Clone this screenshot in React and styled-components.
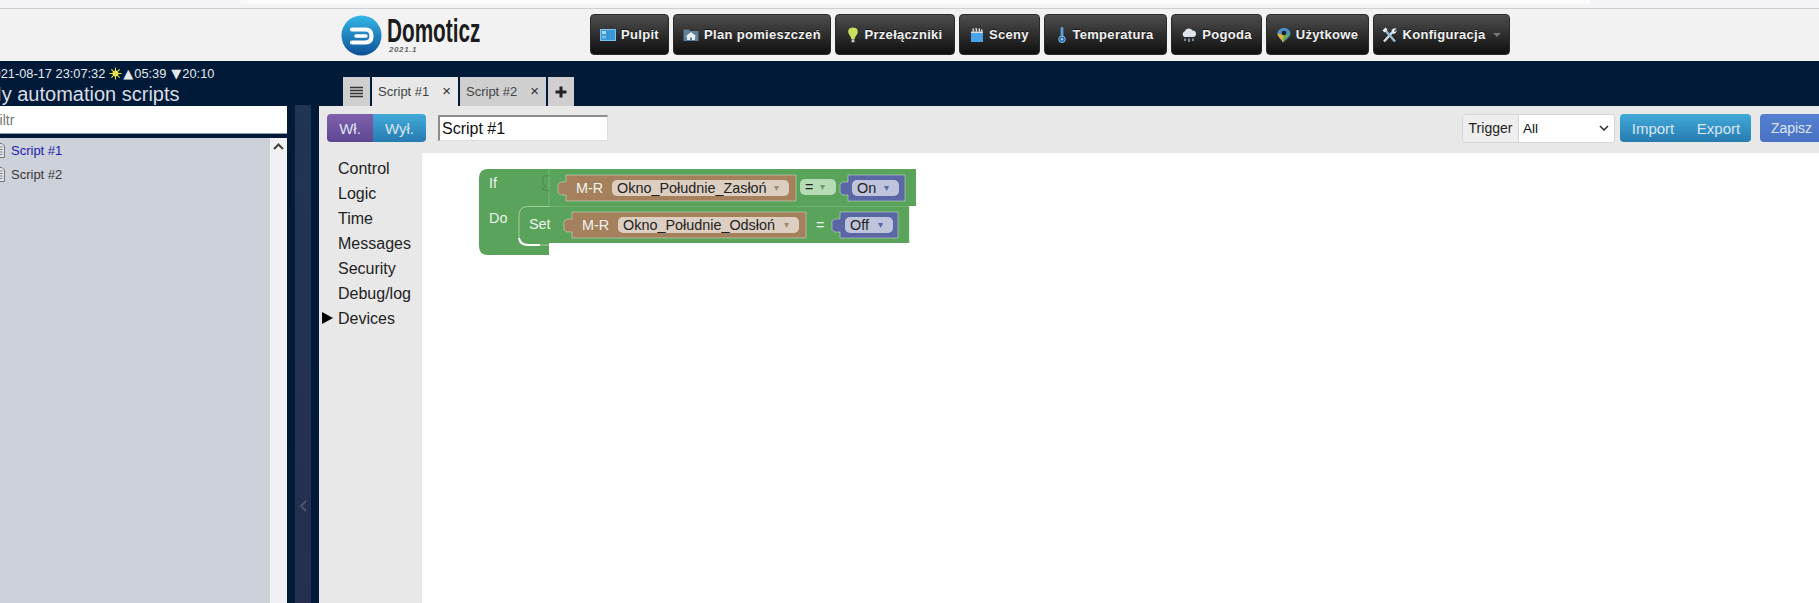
import React from "react";
import styled, { createGlobalStyle } from "styled-components";

const Global = createGlobalStyle`
  html, body { margin: 0; padding: 0; height: 100%; overflow: hidden; }
  body { font-family: "Liberation Sans", Arial, sans-serif; background: #fff; }
  #root { height: 100%; }
`;

const Page = styled.div`
  width: 1819px;
  height: 603px;
  display: flex;
  flex-direction: column;
  overflow: hidden;
`;

const TopStrip = styled.div`
  height: 8px;
  flex-shrink: 0;
  background: #f4f4f6;
  border-bottom: 1px solid #cfcfcf;
  padding-left: 240px;
`;

const TopPill = styled.div`
  width: 1350px;
  height: 4px;
  background: #fbfbfb;
  border-radius: 0 0 6px 6px;
`;

const Header = styled.header`
  height: 52px;
  flex-shrink: 0;
  display: flex;
  align-items: center;
  background: #f2f2f2;
  padding-left: 341px;
`;

const Brand = styled.div`
  display: flex;
  align-items: center;
  gap: 5px;
  width: 249px;
`;

const BrandText = styled.div`
  display: flex;
  flex-direction: column;
  width: 94px;
  margin-top: -3px;
`;

const BrandName = styled.span`
  display: block;
  width: 155px;
  font-weight: 700;
  font-size: 34px;
  line-height: 32px;
  color: #1c1c1c;
  transform: scaleX(0.61);
  transform-origin: left center;
`;

const BrandVersion = styled.span`
  font-size: 8px;
  line-height: 8px;
  font-style: italic;
  font-weight: 700;
  letter-spacing: 0.6px;
  color: #666;
  margin-left: 2px;
`;

const Nav = styled.nav`
  display: flex;
  gap: 4px;
  margin-top: -1px;
`;

const NavButton = styled.div`
  height: 41px;
  box-sizing: border-box;
  display: flex;
  align-items: center;
  justify-content: center;
  gap: 5px;
  width: ${({ $w }) => $w}px;
  border-radius: 4px;
  border: 1px solid #2a2a2a;
  background: linear-gradient(#4e4e4e, #0f0f0f);
  color: #f1f1f1;
  font-size: 13px;
  font-weight: 700;
  letter-spacing: 0.3px;
  text-shadow: 0 -1px 0 rgba(0, 0, 0, 0.6);
`;

const Caret = styled.span`
  width: 0;
  height: 0;
  margin-left: 2px;
  border-left: 4px solid transparent;
  border-right: 4px solid transparent;
  border-top: 4px solid #777;
`;

const Body = styled.div`
  flex: 1;
  display: flex;
  min-height: 0;
  background: #001a38;
`;

const Side = styled.aside`
  width: 287px;
  flex-shrink: 0;
  display: flex;
  flex-direction: column;
  overflow: hidden;
`;

const Clock = styled.div`
  margin: 4px 0 0 -13.5px;
  height: 16px;
  display: flex;
  align-items: center;
  gap: 1px;
  white-space: nowrap;
  font-size: 12.8px;
  color: #e4e8ee;
`;

const SunIcon = styled.svg`
  margin-left: 3px;
`;

const Triangle = styled.span`
  font-family: "DejaVu Sans", sans-serif;
  font-size: 13px;
  margin-left: ${({ $gap }) => $gap || 0}px;
`;

const Title = styled.h2`
  margin: 2px 0 0 -15px;
  height: 23px;
  line-height: 23px;
  font-size: 20px;
  font-weight: 400;
  white-space: nowrap;
  color: #d8dde4;
`;

const FilterInput = styled.input`
  display: block;
  box-sizing: border-box;
  height: 28px;
  flex-shrink: 0;
  width: 296px;
  margin-left: -9px;
  padding: 0;
  border: 0;
  border-bottom: 1px solid #8b9bb0;
  background: #fff;
  font-family: inherit;
  font-size: 14px;
  outline: none;
  &::placeholder { color: #777; opacity: 1; }
`;

const ListPanel = styled.div`
  margin-top: 4px;
  flex: 1;
  display: flex;
  min-height: 0;
`;

const ScriptList = styled.ul`
  flex: 1;
  margin: 0;
  padding: 0;
  list-style: none;
  background: #cdd1d9;
`;

const ScriptRow = styled.li`
  height: 24px;
  display: flex;
  align-items: center;
  gap: 6px;
  margin-left: -7px;
  font-size: 13px;
  color: ${({ $active }) => ($active ? "#1c1cb0" : "#3a3a3a")};
`;

const Scrollbar = styled.div`
  width: 17px;
  background: #f1f1f3;
  display: flex;
  justify-content: center;
  padding-top: 5px;
  box-sizing: border-box;
`;

const Splitter = styled.div`
  width: 16px;
  flex-shrink: 0;
  margin: 44px 8px 0;
  background: linear-gradient(#1f3554, #262f50);
  display: flex;
  align-items: flex-end;
  justify-content: center;
  padding-bottom: 91px;
  box-sizing: border-box;
`;

const Editor = styled.section`
  flex: 1;
  min-width: 0;
  display: flex;
  flex-direction: column;
`;

const TabBar = styled.div`
  height: 45px;
  flex-shrink: 0;
  display: flex;
  align-items: flex-end;
  gap: 2px;
  padding-left: 24px;
`;

const TabIcon = styled.div`
  height: 29px;
  width: ${({ $w }) => $w}px;
  display: flex;
  align-items: center;
  justify-content: center;
  background: #cfcfcf;
`;

const Tab = styled.div`
  height: 29px;
  width: ${({ $w }) => $w}px;
  box-sizing: border-box;
  padding: 0 7px 0 6px;
  display: flex;
  align-items: center;
  justify-content: space-between;
  font-size: 13px;
  color: #444;
  background: ${({ $active }) => ($active ? "#e8e8e8" : "#cfcfcf")};
`;

const TabClose = styled.span`
  font-size: 15px;
  color: #333;
  margin-top: -3px;
`;

const Panel = styled.div`
  flex: 1;
  min-height: 0;
  display: flex;
  flex-direction: column;
  background: #e8e8e8;
`;

const Toolbar = styled.div`
  height: 47px;
  flex-shrink: 0;
  display: flex;
  align-items: center;
  padding-left: 8px;
  padding-bottom: 3px;
  box-sizing: border-box;
`;

const Segment = styled.div`
  display: flex;
  height: 28px;
  border-radius: 4px;
  overflow: hidden;
`;

const SegmentButton = styled.div`
  display: flex;
  align-items: center;
  justify-content: center;
  width: ${({ $w }) => $w}px;
  font-size: ${({ $kind }) => ($kind === "save" ? 14 : 15)}px;
  color: #d9e6f2;
  background: ${({ $kind }) =>
    $kind === "purple"
      ? "linear-gradient(#8160ac, #5e4792)"
      : $kind === "save"
      ? "linear-gradient(#5580d2, #4a72c2)"
      : "linear-gradient(#41aad9, #277bb0)"};
`;

const NameInput = styled.input`
  box-sizing: border-box;
  margin-left: 12px;
  width: 170px;
  height: 26px;
  padding: 0 2px;
  border: 0;
  border-top: 2px solid #8c8c8c;
  border-left: 2px solid #8c8c8c;
  border-right: 1px solid #ddd;
  border-bottom: 1px solid #ddd;
  background: #fff;
  font-family: "Liberation Sans", sans-serif;
  font-size: 16px;
  color: #111;
  outline: none;
`;

const RightTools = styled.div`
  margin-left: auto;
  display: flex;
  align-items: center;
`;

const TriggerGroup = styled.div`
  display: flex;
  height: 29px;
  box-sizing: border-box;
  border: 1px solid #d6d6d6;
  border-radius: 4px;
  overflow: hidden;
  margin-right: 5px;
`;

const TriggerLabel = styled.div`
  width: 55px;
  display: flex;
  align-items: center;
  justify-content: center;
  font-size: 14px;
  color: #222;
  background: #eee;
  border-right: 1px solid #d6d6d6;
`;

const TriggerSelect = styled.div`
  width: 95px;
  box-sizing: border-box;
  padding: 0 5px 0 4px;
  display: flex;
  align-items: center;
  justify-content: space-between;
  font-size: 13.5px;
  color: #111;
  background: #fff;
`;

const SaveWrap = styled.div`
  margin-left: 9px;
  margin-right: -4px;
`;

const Work = styled.div`
  flex: 1;
  min-height: 0;
  display: flex;
`;

const Toolbox = styled.ul`
  width: 103px;
  flex-shrink: 0;
  box-sizing: border-box;
  margin: 0;
  padding: 3px 0 0 19px;
  list-style: none;
`;

const ToolboxItem = styled.li`
  position: relative;
  height: 25px;
  line-height: 25px;
  font-size: 16px;
  color: #222;
`;

const ToolboxArrow = styled.span`
  position: absolute;
  left: -16px;
  top: 6px;
  width: 0;
  height: 0;
  border-top: 6px solid transparent;
  border-bottom: 6px solid transparent;
  border-left: 11px solid #000;
`;

const Canvas = styled.div`
  flex: 1;
  min-width: 0;
  background: #fff;
  padding: 7px 0 0 48px;
`;

const BlocksSvg = styled.svg`
  display: block;
`;

const BlockLabel = styled.text`
  font-family: "Liberation Sans", sans-serif;
  font-size: 14.4px;
  fill: ${({ $dark }) => ($dark ? "#222" : "#eef3ee")};
`;

const BlockArrow = styled.text`
  font-family: "DejaVu Sans", sans-serif;
  font-size: 10px;
  fill: ${({ $fill }) => $fill};
`;

const LogoIcon = () => (
  <svg width="41" height="41" viewBox="0 0 41 41">
    <defs>
      <linearGradient id="lg" x1="0" y1="0" x2="0" y2="1">
        <stop offset="0" stopColor="#35b7e8" />
        <stop offset="1" stopColor="#0d4f96" />
      </linearGradient>
    </defs>
    <circle cx="20.5" cy="20.5" r="20" fill="url(#lg)" />
    <path d="M11 14.5 H24.5 Q30.5 14.5 30.5 21 Q30.5 27.5 24.5 27.5 H11" stroke="#fff" strokeWidth="4.2" strokeLinecap="round" fill="none" />
    <path d="M15 21 H25" stroke="#fff" strokeWidth="3.4" strokeLinecap="round" />
  </svg>
);

const IconFrame = ({ children, w = 16 }) => (
  <svg width={w} height="16" viewBox={`0 0 ${w} 16`}>
    {children}
  </svg>
);

const icons = {
  pulpit: (
    <IconFrame>
      <rect x="0.5" y="2.5" width="15" height="11" fill="#3a97d6" stroke="#7cc4ee" />
      <rect x="2" y="4" width="4" height="3" fill="#a8d8f5" />
      <rect x="2" y="8.5" width="4" height="3" fill="#6fbbe8" />
    </IconFrame>
  ),
  plan: (
    <IconFrame>
      <path d="M0.5 2.5 H6 L7 4 H15.5 V14 H0.5 Z" fill="#607f98" />
      <path d="M8 5 L13.5 9.5 H12 V13 H4 V9.5 H2.5 Z" fill="#e6edf2" />
      <rect x="7" y="10.5" width="2" height="2.5" fill="#607f98" />
    </IconFrame>
  ),
  bulb: (
    <IconFrame w={12}>
      <path d="M6 0.5 C10 0.5 11.5 3.5 10.5 6.2 C9.6 8.4 8 9.5 7.6 12 H4.4 C4 9.5 2.4 8.4 1.5 6.2 C0.5 3.5 2 0.5 6 0.5 Z" fill="#c9e05c" />
      <rect x="4.6" y="12.3" width="2.8" height="3" fill="#c8c8c8" />
    </IconFrame>
  ),
  scene: (
    <IconFrame w={14}>
      <rect x="1" y="6" width="12" height="9" fill="#4aa3e6" />
      <path d="M3 1.5 L3.6 4.5 M6 1 L6.6 4.5 M9 1.5 L9.6 4.5 M11.5 2.5 L12 4.5" stroke="#e4e4e4" strokeWidth="1.4" />
      <rect x="1" y="4.5" width="12" height="1.5" fill="#ddd" />
    </IconFrame>
  ),
  thermo: (
    <IconFrame w={10}>
      <rect x="3.6" y="0" width="2.8" height="11" rx="1.4" fill="#5b9fe0" />
      <circle cx="5" cy="12.3" r="3.3" fill="#2a70bb" stroke="#9cc8ee" strokeWidth="0.8" />
      <circle cx="5" cy="12.3" r="1.1" fill="#cfe5f7" />
    </IconFrame>
  ),
  cloud: (
    <IconFrame>
      <path d="M3.5 10 A3 3 0 0 1 3.5 4.5 A4.5 4.5 0 0 1 11.5 3.5 A3.3 3.3 0 0 1 12.5 10 Z" fill="#dfe5ea" />
      <path d="M4 11.5 V14 M8 11.5 V15 M12 11.5 V14" stroke="#9db8cc" strokeWidth="1.4" />
    </IconFrame>
  ),
  pin: (
    <IconFrame w={14}>
      <path d="M7 1 C11 1 13.5 3.5 13.5 6.5 C13.5 10 9 12.5 6 15.5 C5 12.5 0.5 10 0.5 6.5 C0.5 3.5 3 1 7 1 Z" fill="#4a90c8" />
      <path d="M6 15.5 C5 12.5 0.5 10 0.5 6.5 L7 8 Z" fill="#dcb63a" />
      <path d="M13.5 6 L7 8 L6 15.5 Z" fill="#6aa84f" />
      <circle cx="7" cy="6" r="2.3" fill="#1e1e1e" />
    </IconFrame>
  ),
  tools: (
    <IconFrame w={15}>
      <path d="M2 14.5 L11 4.5" stroke="#d3dfe8" strokeWidth="2.4" />
      <path d="M3.5 3.5 L13 14.5" stroke="#9cc0da" strokeWidth="2.4" />
      <path d="M9.5 3 Q11.5 0.5 14.5 1.5 L12 4 L13 5 L14.5 3 Q15 6.5 11 7" fill="#e4edf3" />
      <path d="M0.5 3.5 L3.5 0.5 L5.5 2.5 L2.5 5.5 Z" fill="#e8eef3" />
    </IconFrame>
  ),
};

const navItems = [
  { label: "Pulpit", icon: "pulpit", w: 79 },
  { label: "Plan pomieszczeń", icon: "plan", w: 158 },
  { label: "Przełączniki", icon: "bulb", w: 120 },
  { label: "Sceny", icon: "scene", w: 81 },
  { label: "Temperatura", icon: "thermo", w: 123 },
  { label: "Pogoda", icon: "cloud", w: 91 },
  { label: "Użytkowe", icon: "pin", w: 103 },
  { label: "Konfiguracja", icon: "tools", w: 137, caret: true },
];

const toolboxItems = ["Control", "Logic", "Time", "Messages", "Security", "Debug/log", "Devices"];

const DocIcon = () => (
  <svg width="12" height="15" viewBox="0 0 12 15">
    <path d="M0.5 0.5 H9 L11.5 3 V14.5 H0.5 Z" fill="#dfe2e7" stroke="#777" />
    <path d="M2.5 4 H9.5 M2.5 6.5 H9.5 M2.5 9 H9.5 M2.5 11.5 H9.5" stroke="#888" />
  </svg>
);

const Field = ({ x, y, w, text, arrowX, fill, arrow }) => (
  <>
    <rect x={x} y={y} width={w} height="16" rx="5" fill={fill} />
    <BlockLabel $dark x={x + 5} y={y + 13}>{text}</BlockLabel>
    <BlockArrow $fill={arrow} x={arrowX} y={y + 11}>▾</BlockArrow>
  </>
);

// value block with the puzzle tab on the left edge
const Value = ({ x, y, w, fill }) => (
  <path
    d={`M${x} ${y} H${x + w} V${y + 26} H${x} V${y + 20} H${x - 5} L${x - 8} ${y + 18} V${y + 9} L${x - 5} ${y + 7} H${x} Z`}
    fill={fill}
    stroke="#d9e4d9"
    strokeWidth="0.5"
  />
);

const Blocks = () => (
  <BlocksSvg width="470" height="100" viewBox="0 0 470 100">
    <path
      d="M18 9 H446 V46 H439 V83 H79 V95 H18 Q9 95 9 86 V18 Q9 9 18 9 Z"
      fill="#5aa35a"
    />
    <path d="M79 9 V46" stroke="#7dbb7d" strokeWidth="0.8" fill="none" />
    <path d="M79 16 H73 V24 L76 26 L72 29 L79 31" stroke="#44834a" strokeWidth="0.8" fill="none" />
    <path d="M79 46.5 H439 V83" stroke="#7dbb7d" strokeWidth="0.6" fill="none" />
    <path
      d="M79 46.5 H58 Q49 46.5 49 55.5 V76 Q49 85 58 85 H79"
      stroke="#b5d8b5"
      strokeWidth="0.8"
      fill="#5aa35a"
    />
    <path d="M49 78 Q50 85 58 85 H70" stroke="#fff" strokeWidth="2" fill="none" />
    <BlockLabel x="19" y="28">If</BlockLabel>
    <BlockLabel x="19" y="63">Do</BlockLabel>
    <BlockLabel x="59" y="69">Set</BlockLabel>

    <Value x={96} y={15} w={230} fill="#a5805c" />
    <BlockLabel x="106" y="33">M-R</BlockLabel>
    <Field x={142} y={20} w={177} text="Okno_Południe_Zasłoń" arrowX={304} fill="#dccec1" arrow="#9c8a75" />
    <Field x={330} y={19} w={36} text="=" arrowX={350} fill="#b6dcb6" arrow="#6a9c6a" />
    <Value x={378} y={15} w={57} fill="#5b67a5" />
    <Field x={382} y={20} w={47} text="On" arrowX={414} fill="#bfc4dd" arrow="#5b67a5" />

    <Value x={102} y={52} w={234} fill="#a5805c" />
    <BlockLabel x="112" y="70">M-R</BlockLabel>
    <Field x={148} y={57} w={181} text="Okno_Południe_Odsłoń" arrowX={314} fill="#dccec1" arrow="#9c8a75" />
    <BlockLabel x="346" y="70">=</BlockLabel>
    <Value x={370} y={52} w={58} fill="#5b67a5" />
    <Field x={375} y={57} w={48} text="Off" arrowX={408} fill="#bfc4dd" arrow="#5b67a5" />
  </BlocksSvg>
);

const App = () => {
  return (
    <Page>
      <Global />
      <TopStrip>
        <TopPill />
      </TopStrip>
      <Header>
        <Brand>
          <LogoIcon />
          <BrandText>
            <BrandName>Domoticz</BrandName>
            <BrandVersion>2021.1</BrandVersion>
          </BrandText>
        </Brand>
        <Nav>
          {navItems.map((item) => (
            <NavButton key={item.label} $w={item.w}>
              {icons[item.icon]}
              {item.label}
              {item.caret && <Caret />}
            </NavButton>
          ))}
        </Nav>
      </Header>
      <Body>
        <Side>
          <Clock>
            2021-08-17 23:07:32
            <SunIcon width="13" height="13" viewBox="0 0 14 14">
              <circle cx="7" cy="7" r="3.2" fill="#f0e84a" />
              <path d="M7 0.5 V13.5 M0.5 7 H13.5 M2.5 2.5 L11.5 11.5 M11.5 2.5 L2.5 11.5" stroke="#e8e04a" strokeWidth="1.1" />
            </SunIcon>
            <Triangle>▲</Triangle>05:39
            <Triangle $gap={4}>▼</Triangle>20:10
          </Clock>
          <Title>My automation scripts</Title>
          <FilterInput placeholder="Filtr" readOnly />
          <ListPanel>
            <ScriptList>
              <ScriptRow $active>
                <DocIcon />
                Script #1
              </ScriptRow>
              <ScriptRow>
                <DocIcon />
                Script #2
              </ScriptRow>
            </ScriptList>
            <Scrollbar>
              <svg width="11" height="7" viewBox="0 0 11 7">
                <path d="M1 6 L5.5 1.5 L10 6" stroke="#444" strokeWidth="2" fill="none" />
              </svg>
            </Scrollbar>
          </ListPanel>
        </Side>
        <Splitter>
          <svg width="8" height="12" viewBox="0 0 8 12">
            <path d="M7 1 L2 6 L7 11" stroke="#4e5468" strokeWidth="2" fill="none" />
          </svg>
        </Splitter>
        <Editor>
          <TabBar>
            <TabIcon $w={27}>
              <svg width="13" height="12" viewBox="0 0 13 12">
                <path d="M0 1.5 H13 M0 4.5 H13 M0 7.5 H13 M0 10.5 H13" stroke="#333" strokeWidth="1.7" />
              </svg>
            </TabIcon>
            <Tab $active $w={86}>
              Script #1
              <TabClose>×</TabClose>
            </Tab>
            <Tab $w={86}>
              Script #2
              <TabClose>×</TabClose>
            </Tab>
            <TabIcon $w={26}>
              <svg width="12" height="12" viewBox="0 0 12 12">
                <path d="M6 0.5 V11.5 M0.5 6 H11.5" stroke="#222" strokeWidth="3" />
              </svg>
            </TabIcon>
          </TabBar>
          <Panel>
            <Toolbar>
              <Segment>
                <SegmentButton $kind="purple" $w={46}>Wł.</SegmentButton>
                <SegmentButton $w={53}>Wył.</SegmentButton>
              </Segment>
              <NameInput value="Script #1" readOnly />
              <RightTools>
                <TriggerGroup>
                  <TriggerLabel>Trigger</TriggerLabel>
                  <TriggerSelect>
                    All
                    <svg width="10" height="6" viewBox="0 0 10 6">
                      <path d="M1 1 L5 5 L9 1" stroke="#333" strokeWidth="1.6" fill="none" />
                    </svg>
                  </TriggerSelect>
                </TriggerGroup>
                <Segment>
                  <SegmentButton $w={66}>Import</SegmentButton>
                  <SegmentButton $w={65}>Export</SegmentButton>
                </Segment>
                <SaveWrap>
                  <Segment>
                    <SegmentButton $kind="save" $w={63}>Zapisz</SegmentButton>
                  </Segment>
                </SaveWrap>
              </RightTools>
            </Toolbar>
            <Work>
              <Toolbox>
                {toolboxItems.map((name) => (
                  <ToolboxItem key={name}>
                    {name === "Devices" && <ToolboxArrow />}
                    {name}
                  </ToolboxItem>
                ))}
              </Toolbox>
              <Canvas>
                <Blocks />
              </Canvas>
            </Work>
          </Panel>
        </Editor>
      </Body>
    </Page>
  );
};

export default App;
